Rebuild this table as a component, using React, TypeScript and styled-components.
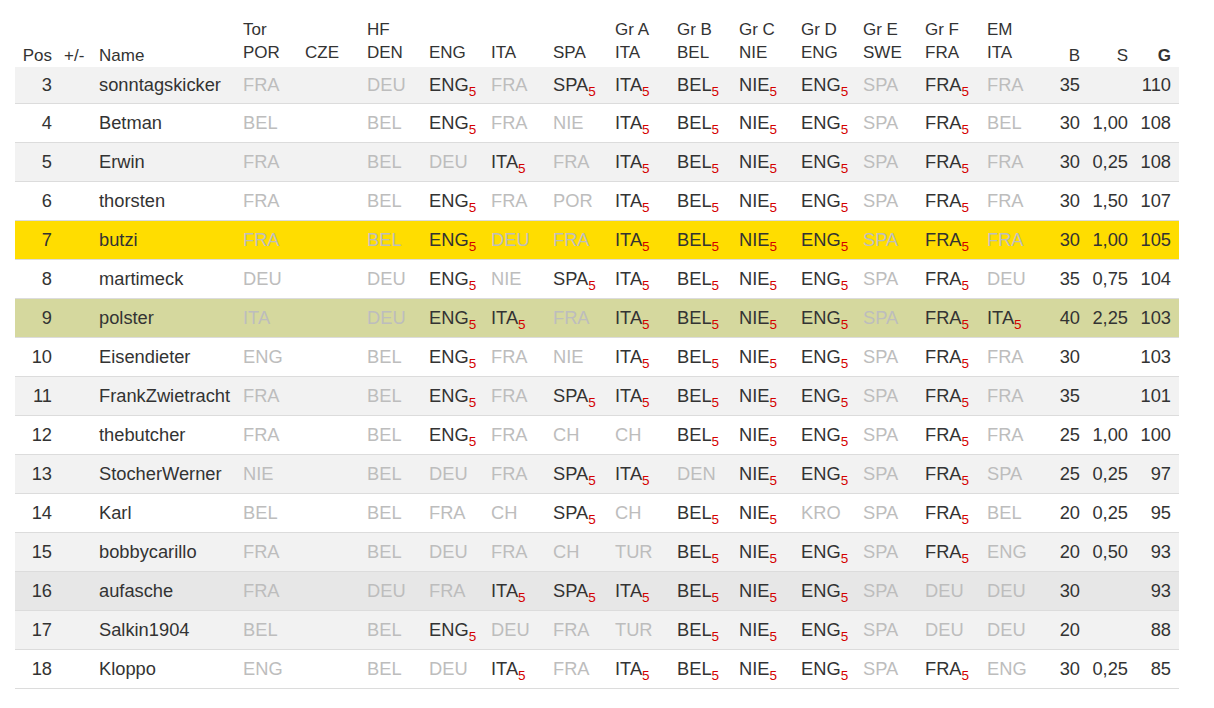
import React from 'react'
import styled, { createGlobalStyle } from 'styled-components';

const GlobalStyle = createGlobalStyle`
  body {
    margin: 8px;
    background: #fff;
    font-family: "Liberation Sans", Arial, sans-serif;
    color: #333;
  }
`;

type Tone = 'plain' | 'stripe' | 'gold' | 'olive' | 'hover';

const toneBg: Record<Tone, string> = {
  plain: '#fff',
  stripe: '#f2f2f2',
  gold: '#ffdd00',
  olive: '#d5d89e',
  hover: '#e7e7e7',
};

const Page = styled.div`
  padding-left: 7px;
`;

const Table = styled.table`
  width: 1164px;
  table-layout: fixed;
  border-collapse: collapse;
  border-spacing: 0;
`;

const HeadCell = styled.th<{ $right?: boolean; $bold?: boolean; $last?: boolean }>`
  height: 59px;
  box-sizing: border-box;
  padding: 0 ${p => (p.$last ? '8px' : '6px')} 0 6px;
  vertical-align: bottom;
  text-align: ${p => (p.$right ? 'right' : 'left')};
  font-size: 17px;
  line-height: 23px;
  font-weight: ${p => (p.$bold ? 700 : 400)};
  color: #333;
  white-space: nowrap;
`;

const Stack = styled.div`
  padding-bottom: 3px;
`;

const Row = styled.tr<{ $tone: Tone }>`
  background: ${p => toneBg[p.$tone]};

  &:first-child td {
    height: 36px;
    padding-top: 1px;
  }
`;

const Cell = styled.td<{ $right?: boolean; $last?: boolean }>`
  height: 39px;
  box-sizing: border-box;
  padding: 0 ${p => (p.$last ? '8px' : '6px')} 0 6px;
  border-bottom: 1px solid #dcdcdc;
  vertical-align: middle;
  text-align: ${p => (p.$right ? 'right' : 'left')};
  font-size: 18.3px;
  line-height: 24px;
  color: #333;
  white-space: nowrap;
  overflow: hidden;
`;

const Tip = styled.span<{ $hit: boolean }>`
  color: ${p => (p.$hit ? '#333' : '#bdbdbd')};
`;

const Points = styled.span`
  font-size: 13.5px;
  color: #d40000;
  vertical-align: -5px;
  line-height: 0;
`;

const widths = [43, 35, 144, 62, 62, 62, 62, 62, 62, 62, 62, 62, 62, 62, 62, 62, 43, 48, 45];

const teamHeads: [string, string][] = [
  ['Tor', 'POR'], ['', 'CZE'], ['HF', 'DEN'], ['', 'ENG'], ['', 'ITA'], ['', 'SPA'],
  ['Gr A', 'ITA'], ['Gr B', 'BEL'], ['Gr C', 'NIE'], ['Gr D', 'ENG'], ['Gr E', 'SWE'],
  ['Gr F', 'FRA'], ['EM', 'ITA'],
];

// team tips: a trailing "*" marks a hit worth 5 points
type Entry = { pos: number; name: string; tips: string[]; b: string; s: string; g: string; tone?: Tone };

const entries: Entry[] = [
  { pos: 3, name: 'sonntagskicker', tips: ['FRA', '', 'DEU', 'ENG*', 'FRA', 'SPA*', 'ITA*', 'BEL*', 'NIE*', 'ENG*', 'SPA', 'FRA*', 'FRA'], b: '35', s: '', g: '110' },
  { pos: 4, name: 'Betman', tips: ['BEL', '', 'BEL', 'ENG*', 'FRA', 'NIE', 'ITA*', 'BEL*', 'NIE*', 'ENG*', 'SPA', 'FRA*', 'BEL'], b: '30', s: '1,00', g: '108' },
  { pos: 5, name: 'Erwin', tips: ['FRA', '', 'BEL', 'DEU', 'ITA*', 'FRA', 'ITA*', 'BEL*', 'NIE*', 'ENG*', 'SPA', 'FRA*', 'FRA'], b: '30', s: '0,25', g: '108' },
  { pos: 6, name: 'thorsten', tips: ['FRA', '', 'BEL', 'ENG*', 'FRA', 'POR', 'ITA*', 'BEL*', 'NIE*', 'ENG*', 'SPA', 'FRA*', 'FRA'], b: '30', s: '1,50', g: '107' },
  { pos: 7, name: 'butzi', tips: ['FRA', '', 'BEL', 'ENG*', 'DEU', 'FRA', 'ITA*', 'BEL*', 'NIE*', 'ENG*', 'SPA', 'FRA*', 'FRA'], b: '30', s: '1,00', g: '105', tone: 'gold' },
  { pos: 8, name: 'martimeck', tips: ['DEU', '', 'DEU', 'ENG*', 'NIE', 'SPA*', 'ITA*', 'BEL*', 'NIE*', 'ENG*', 'SPA', 'FRA*', 'DEU'], b: '35', s: '0,75', g: '104' },
  { pos: 9, name: 'polster', tips: ['ITA', '', 'DEU', 'ENG*', 'ITA*', 'FRA', 'ITA*', 'BEL*', 'NIE*', 'ENG*', 'SPA', 'FRA*', 'ITA*'], b: '40', s: '2,25', g: '103', tone: 'olive' },
  { pos: 10, name: 'Eisendieter', tips: ['ENG', '', 'BEL', 'ENG*', 'FRA', 'NIE', 'ITA*', 'BEL*', 'NIE*', 'ENG*', 'SPA', 'FRA*', 'FRA'], b: '30', s: '', g: '103' },
  { pos: 11, name: 'FrankZwietracht', tips: ['FRA', '', 'BEL', 'ENG*', 'FRA', 'SPA*', 'ITA*', 'BEL*', 'NIE*', 'ENG*', 'SPA', 'FRA*', 'FRA'], b: '35', s: '', g: '101' },
  { pos: 12, name: 'thebutcher', tips: ['FRA', '', 'BEL', 'ENG*', 'FRA', 'CH', 'CH', 'BEL*', 'NIE*', 'ENG*', 'SPA', 'FRA*', 'FRA'], b: '25', s: '1,00', g: '100' },
  { pos: 13, name: 'StocherWerner', tips: ['NIE', '', 'BEL', 'DEU', 'FRA', 'SPA*', 'ITA*', 'DEN', 'NIE*', 'ENG*', 'SPA', 'FRA*', 'SPA'], b: '25', s: '0,25', g: '97' },
  { pos: 14, name: 'Karl', tips: ['BEL', '', 'BEL', 'FRA', 'CH', 'SPA*', 'CH', 'BEL*', 'NIE*', 'KRO', 'SPA', 'FRA*', 'BEL'], b: '20', s: '0,25', g: '95' },
  { pos: 15, name: 'bobbycarillo', tips: ['FRA', '', 'BEL', 'DEU', 'FRA', 'CH', 'TUR', 'BEL*', 'NIE*', 'ENG*', 'SPA', 'FRA*', 'ENG'], b: '20', s: '0,50', g: '93' },
  { pos: 16, name: 'aufasche', tips: ['FRA', '', 'DEU', 'FRA', 'ITA*', 'SPA*', 'ITA*', 'BEL*', 'NIE*', 'ENG*', 'SPA', 'DEU', 'DEU'], b: '30', s: '', g: '93', tone: 'hover' },
  { pos: 17, name: 'Salkin1904', tips: ['BEL', '', 'BEL', 'ENG*', 'DEU', 'FRA', 'TUR', 'BEL*', 'NIE*', 'ENG*', 'SPA', 'DEU', 'DEU'], b: '20', s: '', g: '88' },
  { pos: 18, name: 'Kloppo', tips: ['ENG', '', 'BEL', 'DEU', 'ITA*', 'FRA', 'ITA*', 'BEL*', 'NIE*', 'ENG*', 'SPA', 'FRA*', 'ENG'], b: '30', s: '0,25', g: '85' },
];

const TipCell = ({ tip }: { tip: string }) => {
  const hit = tip.endsWith('*');
  const code = hit ? tip.slice(0, -1) : tip;
  return (
    <Cell>
      {code && (
        <Tip $hit={hit}>
          {code}
          {hit && <Points>5</Points>}
        </Tip>
      )}
    </Cell>
  );
};

export default function App() {
  return (
    <Page>
      <GlobalStyle />
      <Table>
        <colgroup>
          {widths.map((w, i) => (
            <col key={i} style={{ width: w }} />
          ))}
        </colgroup>
        <thead>
          <tr>
            <HeadCell $right>Pos</HeadCell>
            <HeadCell>+/-</HeadCell>
            <HeadCell>Name</HeadCell>
            {teamHeads.map(([top, team], i) => (
              <HeadCell key={i}>
                <Stack>
                  {top || '\u00a0'}
                  <br />
                  {team}
                </Stack>
              </HeadCell>
            ))}
            <HeadCell $right>B</HeadCell>
            <HeadCell $right>S</HeadCell>
            <HeadCell $right $bold $last>G</HeadCell>
          </tr>
        </thead>
        <tbody>
          {entries.map((e, i) => (
            <Row key={e.pos} $tone={e.tone ?? (i % 2 === 0 ? 'stripe' : 'plain')}>
              <Cell $right>{e.pos}</Cell>
              <Cell />
              <Cell>{e.name}</Cell>
              {e.tips.map((t, j) => (
                <TipCell key={j} tip={t} />
              ))}
              <Cell $right>{e.b}</Cell>
              <Cell $right>{e.s}</Cell>
              <Cell $right $last>{e.g}</Cell>
            </Row>
          ))}
        </tbody>
      </Table>
    </Page>
  );
}
